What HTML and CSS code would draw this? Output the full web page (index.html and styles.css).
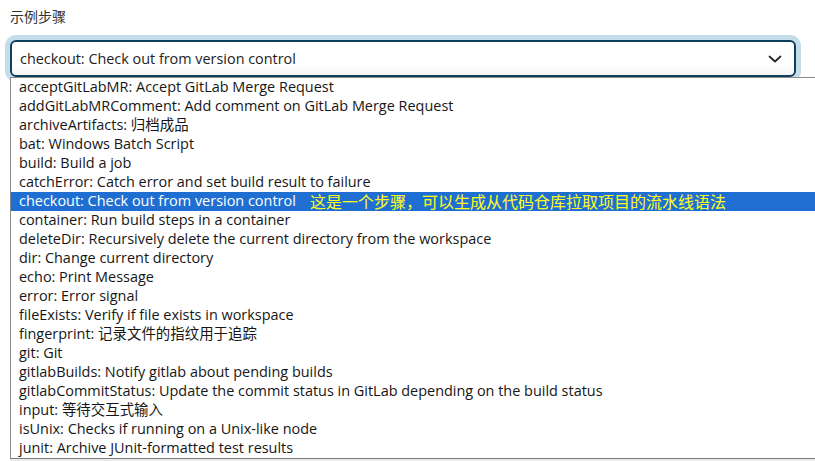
FILE: index.html
```html
<!DOCTYPE html>
<html lang="zh">
<head>
<meta charset="utf-8">
<title>示例步骤</title>
<link rel="stylesheet" href="styles.css">
</head>
<body>
<div class="page">
  <div class="label">示例步骤</div>
  <div class="select">
    <span class="select-value">checkout: Check out from version control</span>
    <svg class="chevron" width="14" height="8" viewBox="0 0 14 8"><polyline points="1.5,1.5 7,6.5 12.5,1.5" fill="none" stroke="#222" stroke-width="1.7" stroke-linecap="round" stroke-linejoin="round"/></svg>
  </div>
  <ul class="options">
    <li>acceptGitLabMR: Accept GitLab Merge Request</li>
    <li>addGitLabMRComment: Add comment on GitLab Merge Request</li>
    <li>archiveArtifacts: 归档成品</li>
    <li>bat: Windows Batch Script</li>
    <li>build: Build a job</li>
    <li>catchError: Catch error and set build result to failure</li>
    <li class="selected">checkout: Check out from version control<span class="note">这是一个步骤，可以生成从代码仓库拉取项目的流水线语法</span></li>
    <li>container: Run build steps in a container</li>
    <li>deleteDir: Recursively delete the current directory from the workspace</li>
    <li>dir: Change current directory</li>
    <li>echo: Print Message</li>
    <li>error: Error signal</li>
    <li>fileExists: Verify if file exists in workspace</li>
    <li>fingerprint: 记录文件的指纹用于追踪</li>
    <li>git: Git</li>
    <li>gitlabBuilds: Notify gitlab about pending builds</li>
    <li>gitlabCommitStatus: Update the commit status in GitLab depending on the build status</li>
    <li>input: 等待交互式输入</li>
    <li>isUnix: Checks if running on a Unix-like node</li>
    <li>junit: Archive JUnit-formatted test results</li>
  </ul>
  <div class="behind"></div>
</div>
</body>
</html>
```
FILE: styles.css
```css
html, body {
  margin: 0;
  padding: 0;
  overflow: hidden;
  background: #ffffff;
}

.page {
  width: 830px;
  padding: 7px 0 0 10px;
  font-family: "Open Sans", "Noto Sans CJK SC", sans-serif;
  font-size: 14.45px;
  color: #161616;
}

.label {
  height: 20px;
  line-height: 20px;
  font-size: 14px;
  color: #333333;
  margin-bottom: 13px;
}

.select {
  box-sizing: border-box;
  width: 786px;
  height: 37px;
  border: 2px solid #0f3d5e;
  border-radius: 6px;
  box-shadow: 0 0 0 5px #c5dceb;
  background: linear-gradient(#ffffff 70%, #f5f5f5);
  display: flex;
  align-items: center;
  justify-content: space-between;
  padding: 0 12px 0 8px;
  color: #222222;
  font-size: 14.4px;
}

.select-value {
  line-height: 20px;
}

.chevron {
  display: block;
}

.options {
  list-style: none;
  margin: 0;
  padding: 0;
  width: 830px;
  background: #ffffff;
  border-top: 1px solid #8a8a8a;
  border-left: 1px solid #8a8a8a;
  border-bottom: 1px solid #7a7a7a;
}

.options li {
  height: 19px;
  line-height: 18px;
  padding-bottom: 1px;
  box-sizing: border-box;
  padding-left: 8px;
  white-space: nowrap;
  position: relative;
}

.options li.selected {
  background: #1f6fd2;
  color: #ffffff;
}

.note {
  position: absolute;
  left: 299px;
  top: 0;
  font-size: 16px;
  line-height: 18px;
  color: #ffff1a;
  font-family: "Noto Sans CJK SC", sans-serif;
}

.behind {
  height: 12px;
  background: #ebebeb;
}
```
